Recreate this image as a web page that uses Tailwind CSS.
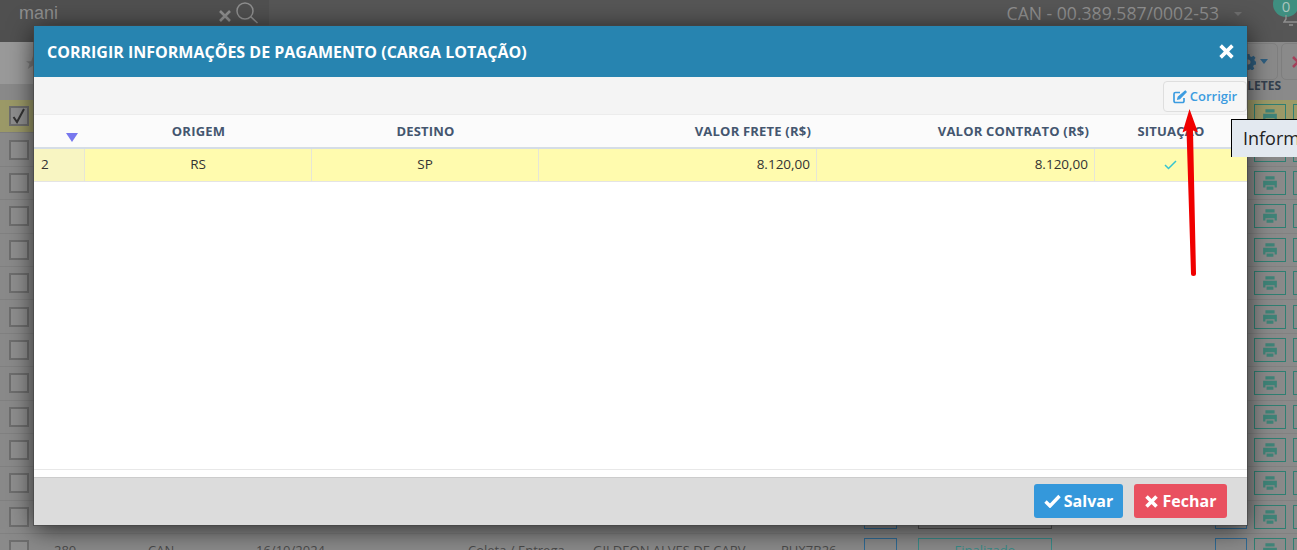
<!DOCTYPE html>
<html lang="pt-BR">
  <head>
    <meta charset="UTF-8" />
    <meta name="viewport" content="width=device-width, initial-scale=1.0" />
    <title>Corrigir informações de pagamento</title>
    <script src="https://cdn.jsdelivr.net/npm/@tailwindcss/browser@4"></script>
  </head>
  <body class="bg-[#8a8a8a]">
    <div class="relative w-[1297px] h-[550px] overflow-hidden font-['Open_Sans',sans-serif]">
      <!-- page behind the modal -->
      <header class="h-[42px] bg-[#565656] flex items-center text-[#8f8f8f]">
        <div class="w-[269px] h-full bg-[#505050] flex items-start pl-[19px] pr-[10px]">
          <span class="font-['Liberation_Sans',sans-serif] text-[18px] leading-none mt-[4px]">mani</span>
          <svg class="ml-auto w-[12px] h-[12px] mt-[10px]" viewBox="0 0 12 12" fill="none" stroke="currentColor" stroke-width="2.6"><path d="M1 1l10 10M11 1L1 11" /></svg>
          <svg class="w-[24px] h-[24px] ml-[4px] mt-[1px]" viewBox="0 0 24 24" fill="none" stroke="currentColor" stroke-width="1.5"><circle cx="10" cy="10" r="8" /><path d="M15.500 15.500l7 6.500" /></svg>
        </div>
        <div class="ml-auto flex items-center pb-[15px]">
          <span class="text-[17.6px] mr-[15px] leading-none">CAN - 00.389.587/0002-53</span>
          <span class="w-0 h-0 border-x-[4px] border-x-transparent border-t-[4px] border-t-[#6f6f6f] mr-[55px]"></span>
        </div>
      </header>
      <div class="absolute left-[1273px] top-[-9px] w-[26px] h-[26px] rounded-full bg-[#3f8f80] text-[#a9c4bd] text-[15px] text-center leading-[30px]">0</div>
      <svg class="absolute left-[1283px] top-[14px] w-[14px] h-[12px]" viewBox="0 0 14 12" fill="none" stroke="#8f8f8f" stroke-width="1.400"><path d="M3 1v4L1 8h13M6 11h4" /></svg>

      <div class="h-[58px] bg-[#8a8a8a] flex justify-between">
        <div class="w-[34px] h-[42px] bg-[#9a9a9a] border-r border-[#8a8a8a] flex">
          <svg class="ml-[26px] mt-[12px] w-[8px] h-[16px]" viewBox="0 0 8 16" fill="#7d7d7d"><path d="M8 1v11l-6 4 2-6-4-3h6z" /></svg>
        </div>
        <div class="w-[70px] relative">
          <div class="flex gap-[3px] pt-[1px]">
            <div class="w-[51px] h-[37px] shrink-0 border border-[#7f7f7f] rounded-[5px] flex items-center justify-end gap-[4px] pr-[9px]">
              <svg class="w-[16px] h-[16px]" viewBox="0 0 16 16" fill="#2f5f80"><path d="M6.500 0h3l.5 2.200 1.500.7 2-1.200 2 2-1.200 2 .7 1.500L16 7.500v3l-2.200.5-.7 1.500 1.200 2-2 2-2-1.200-1.500.7L9.500 16h-3L6 13.800l-1.500-.7-2 1.200-2-2 1.200-2L1 8.800 0 8.500v-3z" /><circle cx="8" cy="8" r="2.500" fill="#8a8a8a" /></svg>
              <span class="w-0 h-0 border-x-[4px] border-x-transparent border-t-[5px] border-t-[#2f5f80]"></span>
            </div>
            <div class="w-[30px] h-[37px] shrink-0 border border-[#7f7f7f] rounded-[5px] flex pl-[10px] pt-[12px]">
              <svg class="w-[12px] h-[12px] shrink-0" viewBox="0 0 12 12" fill="none" stroke="#a5405a" stroke-width="2.600"><path d="M1 1l10 10M11 1L1 11" /></svg>
            </div>
          </div>
          <div class="absolute right-[16px] top-[38px] text-[#34404e] text-[12px] font-bold leading-none">PALETES</div>
        </div>
      </div>

      <div id="rows"></div>

      <!-- modal -->
      <div class="absolute left-[34px] top-[26px] w-[1213px] h-[499px] bg-white flex flex-col shadow-[0_4px_24px_rgba(0,0,0,0.7)] outline outline-[#444]/60">
        <div class="h-[51px] shrink-0 bg-[#2784b0] flex items-center justify-between pl-[13px] pr-[13px] text-white">
          <h1 class="text-[16px] font-bold leading-none">CORRIGIR INFORMAÇÕES DE PAGAMENTO (CARGA LOTAÇÃO)</h1>
          <svg class="w-[15px] h-[15px]" viewBox="0 0 14 14" fill="none" stroke="white" stroke-width="3.400"><path d="M1.500 1.500l11 11M12.500 1.500l-11 11" /></svg>
        </div>
        <div class="h-[38px] shrink-0 bg-[#f4f4f4] flex justify-end items-start pt-[4px] border-b border-[#ececec]">
          <button class="h-[31px] w-[84px] bg-[#f6f6f6] border border-[#dedede] rounded-[4px] flex items-center justify-center gap-[3px] text-[#3c9ce0] text-[13px] font-semibold">
            <svg class="w-[14px] h-[14px]" viewBox="0 0 14 14" fill="none" stroke="#3c9ce0" stroke-width="1.700"><path d="M11 8v3a1.500 1.500 0 0 1-1.500 1.500h-7A1.500 1.500 0 0 1 1 11V4a1.500 1.500 0 0 1 1.500-1.500H7" /><path d="M12.200 1l1 1-6.500 6.600-2 .6.500-2.100z" fill="#3c9ce0" stroke-width="1.200" /></svg>
            Corrigir
          </button>
        </div>
        <div class="grid grid-cols-[51px_227px_227px_278px_278px_152px] h-[34px] shrink-0 bg-[#fbfbfb] border-b-2 border-[#d5dde6] text-[#44566f] text-[13px] font-bold tracking-[0.2px] leading-[33px]">
          <div class="relative"><span class="absolute left-[32px] top-[18px] w-0 h-0 border-x-[6px] border-x-transparent border-t-[9px] border-t-[#7777ee]"></span></div>
          <div class="text-center">ORIGEM</div>
          <div class="text-center">DESTINO</div>
          <div class="text-right pr-[6px]">VALOR FRETE (R$)</div>
          <div class="text-right pr-[6px]">VALOR CONTRATO (R$)</div>
          <div class="text-center">SITUAÇÃO</div>
        </div>
        <div class="grid grid-cols-[51px_227px_227px_278px_278px_152px] h-[33px] shrink-0 bg-[#fffbae] border-b border-[#e4e4e4] text-[#333] text-[13.5px] leading-[31px]">
          <div class="bg-[#f8f5c2] pl-[7px] border-r border-[#e6e6d6]">2</div>
          <div class="text-center border-r border-[#e6e6d6]">RS</div>
          <div class="text-center border-r border-[#e6e6d6]">SP</div>
          <div class="text-right pr-[6px] border-r border-[#e6e6d6]">8.120,00</div>
          <div class="text-right pr-[6px] border-r border-[#e6e6d6]">8.120,00</div>
          <div class="flex justify-center items-center pr-[2px]">
            <svg class="w-[13px] h-[10px]" viewBox="0 0 13 10" fill="none" stroke="#35c4d0" stroke-width="1.500"><path d="M1 5l3.500 3.500L12 1" /></svg>
          </div>
        </div>
        <div class="flex-1 border-b border-[#e8e8e8] min-h-0"></div>
        <div class="h-[7px] shrink-0 bg-white"></div>
        <div class="h-[48px] shrink-0 bg-[#dcdcdc] border-t border-[#cccccc] flex justify-end items-start pt-[6px] pr-[20px] gap-[11px]">
          <button class="w-[89px] h-[34px] bg-[#3498db] rounded-[3px] text-white text-[16px] font-bold flex items-center justify-center gap-[3px]">
            <svg class="w-[17px] h-[14px]" viewBox="0 0 17 14" fill="none" stroke="white" stroke-width="3.400"><path d="M1.500 7.500l4.500 4.500L15.500 2" /></svg>
            Salvar
          </button>
          <button class="w-[93px] h-[34px] bg-[#e95160] rounded-[3px] text-white text-[16px] font-bold flex items-center justify-center gap-[5px]">
            <svg class="w-[13px] h-[13px]" viewBox="0 0 13 13" fill="none" stroke="white" stroke-width="3.600"><path d="M1.500 1.500l10 10M11.500 1.500l-10 10" /></svg>
            Fechar
          </button>
        </div>
      </div>

      <!-- tooltip over the modal edge -->
      <div class="absolute left-[1231px] top-[119px] w-[66px] h-[38px] bg-[#e3e9f0] border-l border-t border-black text-[#222] text-[18px] pl-[11px] leading-[37px] whitespace-nowrap overflow-hidden">Informações</div>

      <!-- red annotation arrow -->
      <svg class="absolute left-[1170px] top-[100px] w-[40px] h-[190px]" viewBox="0 0 40 190" fill="none">
        <path d="M19.500 9L28 32.500l-5-2 3 143a2.500 2.500 0 0 1-5 0L16.500 30.500l-4 2z" fill="#f00000" />
      </svg>
    </div>

    <script>
      const rows = document.getElementById("rows");
      for (let i = 0; i < 14; i++) {
        const row = document.createElement("div");
        row.className =
          i === 0
            ? "h-[33.4px] bg-[#9c9a68] border-b border-[#7f7f7f] flex items-center text-[#4a4a4a] text-[13px]"
            : "h-[33.4px] border-b border-[#818181] flex items-center text-[#4a4a4a] text-[13px]";
        const last = i === 13;
        const check =
          i === 0
            ? `<svg class="w-[16px] h-[16px]" viewBox="0 0 16 16" fill="none" stroke="#333" stroke-width="2"><path d="M2.500 9l3.500 5L13 1" /></svg>`
            : "";
        const statusBorder = i === 12 ? "border-[#555555]" : "border-[#3a8a88]";
        row.innerHTML = `
          <span class="ml-[9px] w-[20px] h-[20px] shrink-0 border-2 border-[#6e6e6e] bg-[#8f8f8f]">${check}</span>
          <span class="ml-[25px] w-[94px] shrink-0">${last ? "280" : ""}</span>
          <span class="w-[108px] shrink-0">${last ? "CAN" : ""}</span>
          <span class="w-[212px] shrink-0">${last ? "16/10/2024" : ""}</span>
          <span class="w-[125px] shrink-0">${last ? "Coleta / Entrega" : ""}</span>
          <span class="w-[188px] shrink-0 whitespace-nowrap overflow-hidden">${last ? "GILDEON ALVES DE CARV" : ""}</span>
          <span class="w-[83px] shrink-0">${last ? "PUX7B26" : ""}</span>
          <span class="w-[33px] h-[24px] shrink-0 border border-[#2f6a94]"></span>
          <span class="ml-[21px] w-[134px] h-[24px] shrink-0 border ${statusBorder} text-center text-[#3a8a88] leading-[22px]">${last ? "Finalizado" : ""}</span>
          <span class="ml-[163px] w-[32px] h-[24px] shrink-0 border border-[#2f6a94]"></span>
          <span class="ml-[7px] w-[32px] h-[24px] shrink-0 border border-[#2f7f72] flex items-center justify-center">
            <svg class="w-[16px] h-[16px]" viewBox="0 0 14 14" fill="#3f8478"><path d="M3 1h8v3H3zM1 5h12v6h-2V9H3v2H1zM4 10h6v3H4z" /></svg>
          </span>
          <span class="ml-[7px] w-[20px] h-[24px] shrink-0 border border-[#2f7f72]"></span>`;
        rows.appendChild(row);
      }
    </script>
  </body>
</html>
